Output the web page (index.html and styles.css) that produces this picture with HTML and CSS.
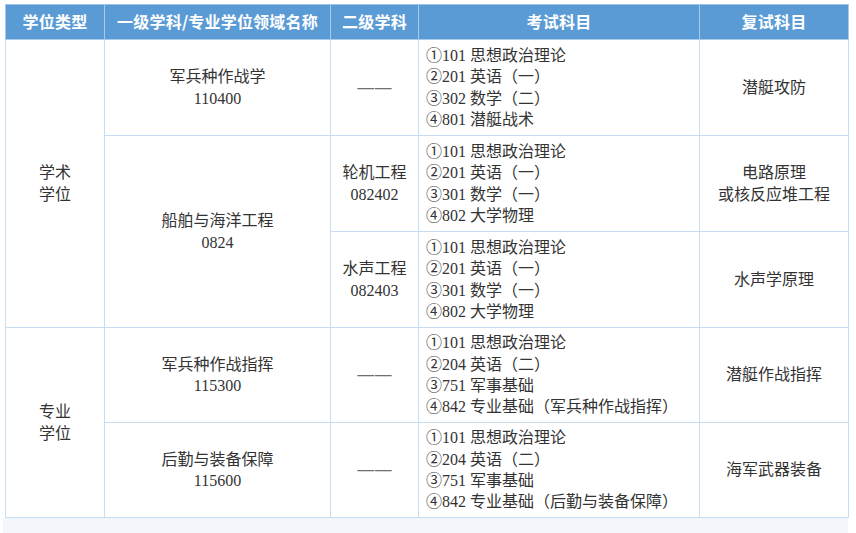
FILE: index.html
```html
<!DOCTYPE html>
<html lang="zh-CN">
<head>
<meta charset="utf-8">
<link rel="stylesheet" href="styles.css">
</head>
<body>
<div class="page">
<table class="grid">
  <colgroup>
    <col class="c1"><col class="c2"><col class="c3"><col class="c4"><col class="c5">
  </colgroup>
  <thead>
    <tr class="head">
      <th>学位类型</th>
      <th>一级学科/专业学位领域名称</th>
      <th>二级学科</th>
      <th>考试科目</th>
      <th>复试科目</th>
    </tr>
  </thead>
  <tbody>
    <tr class="row r1">
      <td rowspan="3">学术<br>学位</td>
      <td>军兵种作战学<br>110400</td>
      <td><span class="dash">——</span></td>
      <td class="exam">①101 思想政治理论<br>②201 英语（一）<br>③302 数学（二）<br>④801 潜艇战术</td>
      <td>潜艇攻防</td>
    </tr>
    <tr class="row r2">
      <td rowspan="2">船舶与海洋工程<br>0824</td>
      <td>轮机工程<br>082402</td>
      <td class="exam">①101 思想政治理论<br>②201 英语（一）<br>③301 数学（一）<br>④802 大学物理</td>
      <td>电路原理<br>或核反应堆工程</td>
    </tr>
    <tr class="row r3">
      <td>水声工程<br>082403</td>
      <td class="exam">①101 思想政治理论<br>②201 英语（一）<br>③301 数学（一）<br>④802 大学物理</td>
      <td>水声学原理</td>
    </tr>
    <tr class="row r4">
      <td rowspan="2">专业<br>学位</td>
      <td>军兵种作战指挥<br>115300</td>
      <td><span class="dash">——</span></td>
      <td class="exam">①101 思想政治理论<br>②204 英语（二）<br>③751 军事基础<br>④842 专业基础（军兵种作战指挥）</td>
      <td>潜艇作战指挥</td>
    </tr>
    <tr class="row r5">
      <td>后勤与装备保障<br>115600</td>
      <td><span class="dash">——</span></td>
      <td class="exam">①101 思想政治理论<br>②204 英语（二）<br>③751 军事基础<br>④842 专业基础（后勤与装备保障）</td>
      <td>海军武器装备</td>
    </tr>
  </tbody>
</table>
<div class="foot"></div>
</div>
</body>
</html>
```

FILE: styles.css
```css
html, body {
  margin: 0;
  padding: 0;
  background: #ffffff;
}
.page {
  padding-top: 4px;
  font-family: "Liberation Serif", "Noto Sans CJK SC", serif;
  color: #333333;
}
.grid {
  margin-left: 5px;
  width: 843px;
  border-collapse: collapse;
  table-layout: fixed;
  border: 1px solid #9dc3e6;
  font-family: "Liberation Serif", "Noto Sans CJK SC", serif;
  font-size: 16px;
  line-height: 21.3px;
}
.c1 { width: 99px; }
.c2 { width: 226px; }
.c3 { width: 88px; }
.c4 { width: 281px; }
.c5 { width: 149px; }
.head {
  height: 35px;
  background: #5b9bd5;
}
.head th {
  color: #ffffff;
  font-family: "Noto Sans CJK SC", sans-serif;
  font-weight: bold;
  font-size: 16px;
  border: 1px solid #a9cbea;
  border-top: none;
  padding: 0;
  letter-spacing: 0.2px;
}
.row {
  height: 96px;
}
.r4, .r5 {
  height: 95px;
}
.row td {
  border: 1px solid #c7ddf1;
  text-align: center;
  vertical-align: middle;
  padding: 0;
  background: #ffffff;
}
.row td.exam {
  text-align: left;
  padding-left: 7px;
}
.dash {
  font-family: "Liberation Serif", serif;
  font-weight: bold;
  font-size: 16.5px;
  color: #707070;
  letter-spacing: 1px;
  margin-right: -1px;
}
.foot {
  margin-left: 3px;
  width: 845px;
  height: 16px;
  background: #f3f7fc;
}
```
